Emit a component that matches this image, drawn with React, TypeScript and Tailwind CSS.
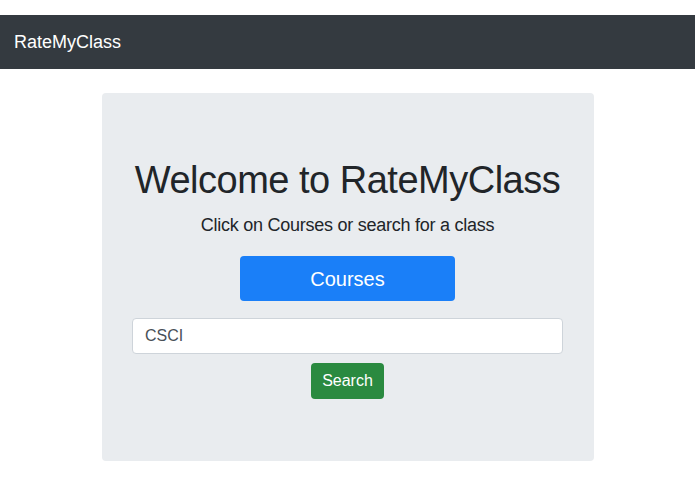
export default function App() {
  return (
    <div className="min-h-[494px] bg-white pt-[15px]" style={{ fontFamily: '"Liberation Sans", Arial, sans-serif' }}>
      <nav className="h-[54px] bg-[#343a40] flex items-center px-[14px]">
        <span className="text-white text-[18px]">RateMyClass</span>
      </nav>
      <div className="flex justify-center pt-[24px]">
        <div className="w-[492px] h-[368px] bg-[#e9ecef] rounded-[4px] flex flex-col items-center pt-[64px]">
          <h1 className="text-[38px] leading-[46px] text-[#212529] tracking-[-0.5px]">Welcome to RateMyClass</h1>
          <p className="mt-[9px] text-[18px] font-light text-[#212529] leading-[26px] tracking-[-0.25px]">Click on Courses or search for a class</p>
          <button className="mt-[18px] w-[215px] h-[45px] bg-[#1a7ff8] rounded-[4px] text-white text-[20px]">Courses</button>
          <div className="mt-[17px] w-[431px] h-[36px] bg-white border border-[#ced4da] rounded-[4px] flex items-center px-[12px] text-[16px] text-[#495057]">CSCI</div>
          <button className="mt-[9px] w-[73px] h-[36px] bg-[#2a8a40] rounded-[4px] text-white text-[16px]">Search</button>
        </div>
      </div>
    </div>
  );
}
